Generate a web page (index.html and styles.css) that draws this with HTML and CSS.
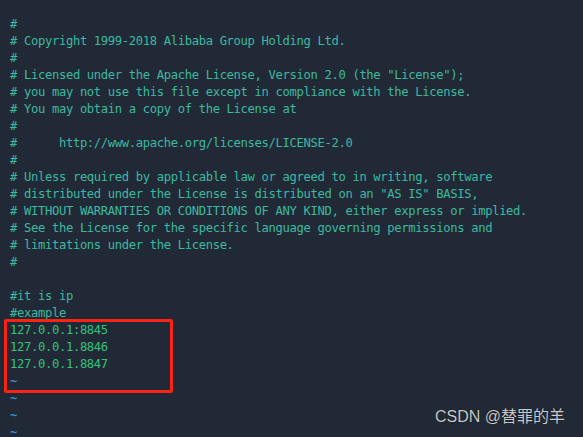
FILE: index.html
```html
<!DOCTYPE html>
<html>
<head>
<meta charset="utf-8">
<link rel="stylesheet" href="styles.css">
</head>
<body>
<div class="editor">
<pre class="code"><span class="c">#</span>
<span class="c"># Copyright 1999-2018 Alibaba Group Holding Ltd.</span>
<span class="c">#</span>
<span class="c"># Licensed under the Apache License, Version 2.0 (the "License");</span>
<span class="c"># you may not use this file except in compliance with the License.</span>
<span class="c"># You may obtain a copy of the License at</span>
<span class="c">#</span>
<span class="c">#      http://www.apache.org/licenses/LICENSE-2.0</span>
<span class="c">#</span>
<span class="c"># Unless required by applicable law or agreed to in writing, software</span>
<span class="c"># distributed under the License is distributed on an "AS IS" BASIS,</span>
<span class="c"># WITHOUT WARRANTIES OR CONDITIONS OF ANY KIND, either express or implied.</span>
<span class="c"># See the License for the specific language governing permissions and</span>
<span class="c"># limitations under the License.</span>
<span class="c">#</span>

<span class="c">#it is ip</span>
<span class="c">#example</span>
<span class="ip">127.0.0.1:8845</span>
<span class="ip">127.0.0.1.8846</span>
<span class="ip">127.0.0.1.8847</span>
<span class="t">~</span>
<span class="t">~</span>
<span class="t">~</span>
<span class="t">~</span></pre>
<div class="highlight"></div>
<div class="watermark">CSDN @替罪的羊</div>
</div>
</body>
</html>
```
FILE: styles.css
```css
html, body {
  margin: 0;
  padding: 0;
  background: #222936;
}
.editor {
  position: relative;
  width: 583px;
  height: 437px;
  overflow: hidden;
  background: #222936;
}
.code {
  margin: 0;
  padding: 16px 0 0 10px;
  font-family: "DejaVu Sans Mono", "Liberation Mono", monospace;
  font-size: 12.2px;
  letter-spacing: -0.35px;
  line-height: 17px;
  color: #3cb9a0;
  white-space: pre;
}
.c { color: #3cb9a0; }
.ip { color: #33c17a; }
.t { color: #3a8fd0; font-weight: bold; }
.highlight {
  position: absolute;
  left: 4px;
  top: 319px;
  width: 163px;
  height: 68px;
  border: 3px solid #fa2314;
  border-radius: 2px;
}
.watermark {
  position: absolute;
  right: 18px;
  bottom: 10px;
  font-family: "Liberation Sans", "Noto Sans CJK SC", sans-serif;
  font-size: 16px;
  color: #c9c9c9;
  text-shadow: 0 0 1px #000;
}
```
